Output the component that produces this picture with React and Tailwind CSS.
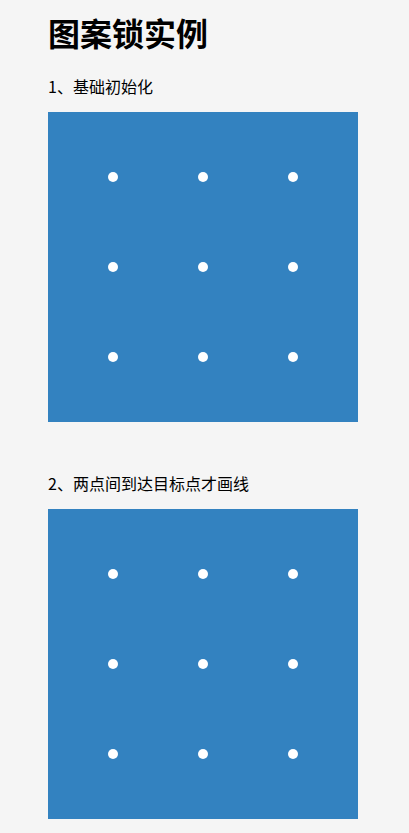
import React from 'react';

const font = { fontFamily: '"Noto Sans CJK SC", "Noto Sans", sans-serif' };

// 3x3 pattern-lock board; every point is a small white dot on a 90px grid
const LockBoard = () => {
  const points = Array.from({ length: 9 }, (_, i) => i);
  return (
    <div className="w-[310px] h-[310px] bg-[#3382c0] p-[20px] grid grid-cols-3 grid-rows-3">
      {points.map((p) => (
        <div key={p} className="flex items-center justify-center">
          <span className="w-[10px] h-[10px] rounded-full bg-white" />
        </div>
      ))}
    </div>
  );
};

const Section = ({ title, className = '' }) => (
  <section className={className}>
    <p className="text-[16px] leading-[24px] text-black mb-[14px]">{title}</p>
    <LockBoard />
  </section>
);

export default function App() {
  return (
    <div className="min-h-[833px] bg-[#f5f5f5] px-[48px] pt-[12px]" style={font}>
      <h1 className="text-[32px] leading-[40px] font-bold text-black">图案锁实例</h1>
      <Section title="1、基础初始化" className="mt-[22px]" />
      <Section title="2、两点间到达目标点才画线" className="mt-[49px]" />
    </div>
  );
}
